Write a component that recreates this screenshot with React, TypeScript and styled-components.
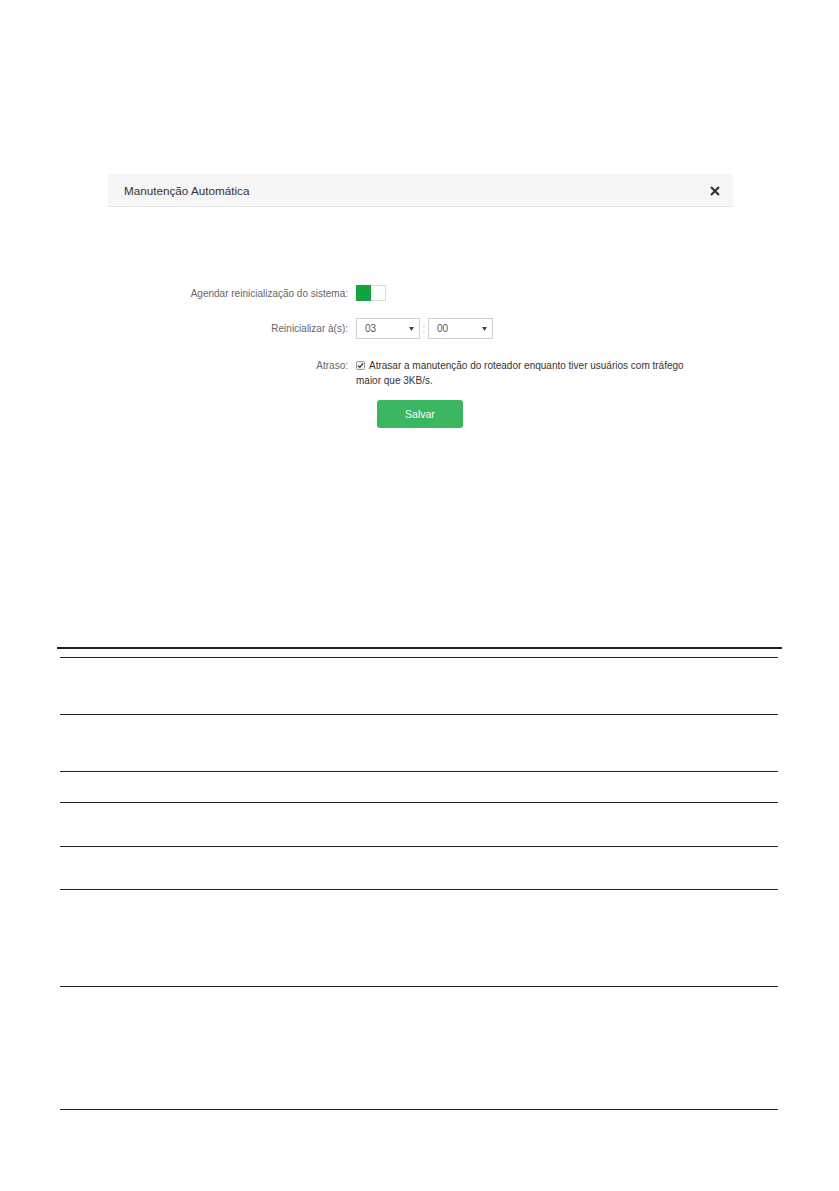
import React from "react";
import styled, { createGlobalStyle } from "styled-components";

const Global = createGlobalStyle`
  html, body { margin: 0; padding: 0; background: #ffffff; }
  body { font-family: "Liberation Sans", Arial, sans-serif; }
`;

const Page = styled.div`
  width: 839px;
  height: 1191px;
  padding-top: 174px;
  box-sizing: border-box;
  background: #fff;
  overflow: hidden;
`;

const Dialog = styled.section`
  margin-left: 108px;
  width: 625px;
`;

const Header = styled.header`
  height: 33px;
  box-sizing: border-box;
  background: #f6f6f6;
  border-bottom: 1px solid #e6e6e6;
  display: flex;
  align-items: center;
  justify-content: space-between;
  padding: 0 12px 0 16px;
`;

const Title = styled.h2`
  margin: 0;
  font-size: 11.7px;
  font-weight: normal;
  color: #333;
`;

const Close = styled.button`
  border: 0;
  background: none;
  padding: 0;
  width: 12px;
  height: 12px;
  display: flex;
  align-items: center;
  justify-content: center;
  margin-top: 1px;
`;

const Form = styled.div`
  margin-top: 78px;
  display: grid;
  grid-template-columns: 348px auto;
  column-gap: 8px;
  font-size: 10px;
  color: #555;
`;

const Label = styled.div<{ $top?: number }>`
  text-align: right;
  line-height: 15px;
  padding-top: ${(p) => p.$top ?? 0}px;
  color: #666;
`;

const Control = styled.div<{ $mt: number }>`
  margin-top: ${(p) => p.$mt}px;
  display: flex;
  align-items: flex-start;
`;

const LabelCell = styled.div<{ $mt: number }>`
  margin-top: ${(p) => p.$mt}px;
`;

const Toggle = styled.div`
  width: 30px;
  height: 16px;
  box-sizing: border-box;
  border: 1px solid #dcdcdc;
  display: flex;
  background: #fff;
`;

const Knob = styled.div`
  width: 15px;
  margin: -1px 0 -1px -1px;
  background: #12a53d;
`;

const Select = styled.div<{ $w: number }>`
  width: ${(p) => p.$w}px;
  height: 21px;
  box-sizing: border-box;
  border: 1px solid #cfcfcf;
  display: flex;
  align-items: center;
  justify-content: space-between;
  padding: 0 5px 0 8px;
  font-size: 10px;
  color: #555;
`;

const Colon = styled.span`
  width: 8px;
  text-align: center;
  color: #aaa;
  line-height: 21px;
`;

const CheckText = styled.div`
  width: 336px;
  line-height: 15px;
  color: #333;
  font-size: 10px;
  padding-top: 1px;
`;

const Box = styled.span`
  display: inline-block;
  width: 9px;
  height: 9px;
  margin-right: 4px;
  vertical-align: -1px;
`;

const SaveButton = styled.button`
  margin-top: 12px;
  margin-left: 21px;
  width: 86px;
  height: 28px;
  border: 0;
  border-radius: 3px;
  background: #3bb661;
  color: #fff;
  font-family: "Liberation Sans", Arial, sans-serif;
  font-size: 10.5px;
`;

const Rules = styled.div`
  margin-top: 219px;
  margin-left: 57px;
  width: 725px;
`;

const TopRule = styled.div`
  height: 2px;
  background: #231f20;
`;

const Table = styled.div`
  margin: 8px 0 0 3px;
  width: 718px;
  border-top: 1px solid #231f20;
`;

const Row = styled.div<{ $h: number }>`
  height: ${(p) => p.$h}px;
  border-bottom: 1px solid #231f20;
`;

const Arrow = () => (
  <svg width="5" height="4" viewBox="0 0 5 4">
    <path d="M0 0 H5 L2.5 4 Z" fill="#444" />
  </svg>
);

export default function App() {
  const rows = [56, 56, 30, 43, 42, 96, 122];
  return (
    <Page>
      <Global />
      <Dialog>
        <Header>
          <Title>Manutenção Automática</Title>
          <Close aria-label="close">
            <svg width="10" height="10" viewBox="0 0 10 10">
              <path d="M1 1 L9 9 M9 1 L1 9" stroke="#333" strokeWidth="2.2" strokeLinecap="butt" />
            </svg>
          </Close>
        </Header>
      </Dialog>
      <Form>
        <LabelCell $mt={0}>
          <Label $top={1}>Agendar reinicialização do sistema:</Label>
        </LabelCell>
        <Control $mt={0}>
          <Toggle>
            <Knob />
          </Toggle>
        </Control>

        <LabelCell $mt={17}>
          <Label $top={3}>Reinicializar à(s):</Label>
        </LabelCell>
        <Control $mt={17}>
          <Select $w={64}>
            <span>03</span>
            <Arrow />
          </Select>
          <Colon>:</Colon>
          <Select $w={65}>
            <span>00</span>
            <Arrow />
          </Select>
        </Control>

        <LabelCell $mt={18}>
          <Label $top={1}>Atraso:</Label>
        </LabelCell>
        <Control $mt={18}>
          <CheckText>
            <Box>
              <svg width="9" height="9" viewBox="0 0 9 9">
                <rect x="0.5" y="0.5" width="8" height="8" rx="1" fill="#f2f2f2" stroke="#9a9a9a" />
                <path d="M2 4.6 L3.8 6.4 L7 2.4" stroke="#333" strokeWidth="1.3" fill="none" />
              </svg>
            </Box>
            Atrasar a manutenção do roteador enquanto tiver usuários com tráfego maior que 3KB/s.
          </CheckText>
        </Control>

        <div />
        <div>
          <SaveButton>Salvar</SaveButton>
        </div>
      </Form>
      <Rules>
        <TopRule />
        <Table>
          {rows.map((h, i) => (
            <Row key={i} $h={h} />
          ))}
        </Table>
      </Rules>
    </Page>
  );
}
